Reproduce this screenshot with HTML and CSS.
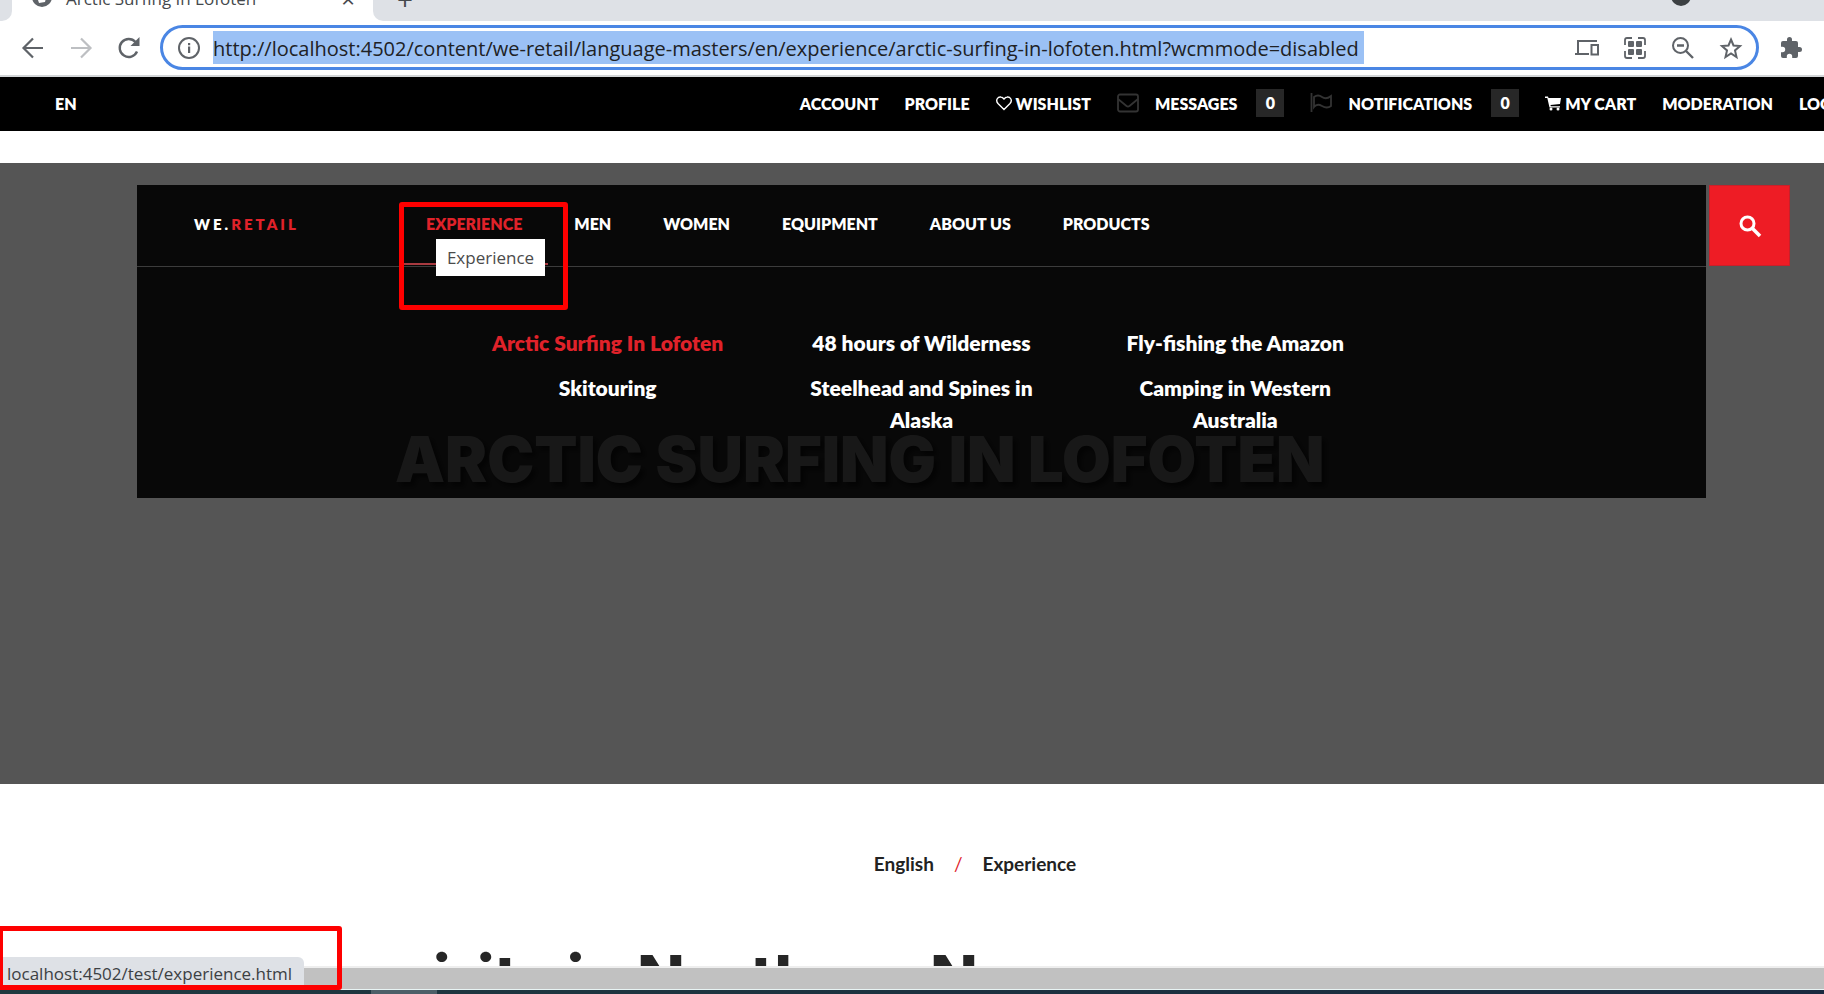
FILE: index.html
```html
<!DOCTYPE html>
<html lang="en">
<head>
    <meta charset="UTF-8">
    <meta name="viewport" content="width=device-width, initial-scale=1.0">
    <title>Arctic Surfing In Lofoten</title>
    <link rel="stylesheet" href="styles.css">
</head>
<body>

<div class="tab-strip">
    <div class="tab-edge"></div>
    <div class="tab">
        <svg class="tab-icon" viewBox="0 0 20 20"><circle cx="10" cy="10" r="10" fill="#5f6368"/><path d="M3 5l6 1 1 4 4 1-1 4-6 1-1-3-3-3z" fill="#fff"/></svg>
        <span class="tab-title">Arctic Surfing In Lofoten</span>
        <span class="tab-close">×</span>
    </div>
    <div class="tab-rest">
        <span class="new-tab">+</span>
        <span class="account-dot"></span>
    </div>
</div>

<div class="toolbar">
    <button class="tool" aria-label="Back"><svg viewBox="0 0 24 24"><path d="M22 12H3M12 2.500L2.500 12l9.500 9.500" fill="none" stroke="#5f6368" stroke-width="2.200"/></svg></button>
    <button class="tool" aria-label="Forward"><svg viewBox="0 0 24 24"><path d="M2 12h19M12 2.500l9.500 9.500-9.500 9.500" fill="none" stroke="#bdbfc2" stroke-width="2.200"/></svg></button>
    <button class="tool" aria-label="Reload"><svg viewBox="0 0 24 24"><path d="M20 15.500A9 9 0 1 1 18.500 6" fill="none" stroke="#5f6368" stroke-width="2.400"/><path d="M22.500 1v9h-9z" fill="#5f6368"/></svg></button>
    <div class="omnibox">
        <svg viewBox="0 0 24 24"><circle cx="12" cy="12" r="10" fill="none" stroke="#5f6368" stroke-width="2"/><path d="M11 10.500h2.200V17H11zM11 7h2.200v2.200H11z" fill="#5f6368"/></svg>
        <input type="text" class="url" aria-label="Address" value="http://localhost:4502/content/we-retail/language-masters/en/experience/arctic-surfing-in-lofoten.html?wcmmode=disabled">
        <div class="omnibox-icons">
            <svg viewBox="0 0 24 24"><path d="M3 18V5h19M0 18h14" fill="none" stroke="#5f6368" stroke-width="2"/><rect x="16.500" y="9" width="6.500" height="9.500" fill="none" stroke="#5f6368" stroke-width="2"/></svg>
            <svg viewBox="0 0 24 24"><path d="M2 9V4q0-2 2-2h5M15 2h5q2 0 2 2v5M22 15v5q0 2-2 2h-5M9 22H4q-2 0-2-2v-5" fill="none" stroke="#5f6368" stroke-width="1.800"/><g fill="#5f6368"><rect x="5" y="5" width="6" height="6" rx="1"/><rect x="13" y="5" width="6" height="6" rx="1"/><rect x="5" y="13" width="6" height="6" rx="1"/><rect x="13" y="13" width="6" height="6" rx="1"/></g></svg>
            <svg viewBox="0 0 24 24"><circle cx="9.500" cy="9.500" r="7.500" fill="none" stroke="#5f6368" stroke-width="2"/><path d="M6 9.500h7M15 15l7 7" fill="none" stroke="#5f6368" stroke-width="2.400"/></svg>
            <svg viewBox="0 0 24 24"><path d="M12 3.500l2.500 6 6.500.6-5 4.300 1.500 6.600L12 17.500 6.500 21l1.500-6.600-5-4.300 6.500-.6z" fill="none" stroke="#5f6368" stroke-width="2"/></svg>
        </div>
    </div>
    <button class="tool" aria-label="Extensions"><svg viewBox="0 0 24 24"><path d="M20.500 11H19V7a2 2 0 0 0-2-2h-4V3.500a2.500 2.500 0 0 0-5 0V5H4a2 2 0 0 0-2 2v3.800h1.500a2.700 2.700 0 0 1 0 5.400H2V20a2 2 0 0 0 2 2h3.800v-1.500a2.700 2.700 0 0 1 5.400 0V22H17a2 2 0 0 0 2-2v-4h1.500a2.500 2.500 0 0 0 0-5z" fill="#5f6368"/></svg></button>
</div>

<div class="top-bar">
    <a href="#">EN</a>
    <div class="top-links">
        <a href="#">ACCOUNT</a>
        <a href="#">PROFILE</a>
        <a href="#"><svg class="small-icon" viewBox="0 0 16 16"><path d="M8 14.500L2 8.500C-1 5 2 1.500 5 2c1.500.2 3 2 3 2s1.500-1.800 3-2c3-.5 6 3 3 6.500z" fill="none" stroke="#fff" stroke-width="1.400"/></svg>WISHLIST</a>
        <a href="#"><svg class="dim-icon" viewBox="0 0 22 22"><rect x="1" y="2.500" width="20" height="17" rx="2" fill="none" stroke="#333" stroke-width="1.800"/><path d="M1 7l8.500 7q1.500 1 3 0L21 7" fill="none" stroke="#333" stroke-width="1.800"/></svg>MESSAGES<span class="count">0</span></a>
        <a href="#"><svg class="dim-icon" viewBox="0 0 22 22"><path d="M1.500 1v19M4 5q4-3 8 0t9-1v10q-4 3-9 0t-8 1z" fill="none" stroke="#333" stroke-width="1.800"/></svg>NOTIFICATIONS<span class="count">0</span></a>
        <a href="#"><svg class="small-icon" viewBox="0 0 16 16"><path d="M0 1.500h3l.5 1.500H16l-1 6-9.500 1 .3 1.200H15v1.300H4.500L2.300 3H0z" fill="#fff"/><circle cx="6" cy="14" r="1.500" fill="#fff"/><circle cx="13" cy="14" r="1.500" fill="#fff"/></svg>MY CART</a>
        <a href="#">MODERATION</a>
        <a href="#">LOGIN</a>
    </div>
</div>

<div class="hero">
    <h1 class="hero-title">ARCTIC SURFING IN LOFOTEN</h1>
    <div class="menu-panel">
        <div class="menu-bar">
            <a href="#" class="logo">WE.<span>RETAIL</span></a>
            <nav class="main-nav">
                <a href="#" class="active">EXPERIENCE</a>
                <a href="#">MEN</a>
                <a href="#">WOMEN</a>
                <a href="#">EQUIPMENT</a>
                <a href="#">ABOUT US</a>
                <a href="#">PRODUCTS</a>
            </nav>
        </div>
        <div class="submenu">
            <a href="#" class="current">Arctic Surfing In Lofoten</a>
            <a href="#">48 hours of Wilderness</a>
            <a href="#">Fly-fishing the Amazon</a>
            <a href="#">Skitouring</a>
            <a href="#">Steelhead and Spines in Alaska</a>
            <a href="#">Camping in Western Australia</a>
        </div>
        <div class="tooltip">Experience</div>
        <div class="mark mark-menu"></div>
    </div>
    <button class="search" aria-label="Search"><svg viewBox="0 0 24 24"><circle cx="9.500" cy="9.500" r="6.500" fill="none" stroke="#fff" stroke-width="3"/><path d="M14 14l8 8" stroke="#fff" stroke-width="3.600"/></svg></button>
</div>

<div class="content">
    <div class="breadcrumb">
        <a href="#">English</a>
        <span>/</span>
        <a href="#">Experience</a>
    </div>
    <h2 class="headline">spirits in Northern Norway</h2>
</div>

<div class="scrollbar"></div>
<div class="taskbar"><span></span></div>

<div class="status">localhost:4502/test/experience.html</div>
<div class="mark mark-status"></div>

</body>
</html>
```

FILE: styles.css
```css
* {
    box-sizing: border-box;
}

body {
    display: flex;
    flex-direction: column;
    height: 100vh;
    margin: 0;
    overflow: hidden;
    font-family: Lato, sans-serif;
    font-weight: 800;
    background-color: #fff;
    color: #222;
}

a {
    color: inherit;
    text-decoration: none;
}

button {
    padding: 0;
    border: none;
    background: none;
}

svg {
    display: block;
}

/* browser chrome */
.tab-strip {
    display: flex;
    flex: none;
    height: 21px;
    font-family: "Open Sans", sans-serif;
    font-weight: 400;
    color: #45494d;
    background-color: #fff;
}

.tab-edge {
    width: 12px;
    background-color: #dee1e6;
    border-bottom-right-radius: 10px;
}

.tab {
    display: flex;
    align-items: flex-end;
    width: 361px;
    padding: 0 18px 0 20px;
    overflow: hidden;
}

.tab-icon {
    flex: none;
    width: 20px;
    height: 20px;
    margin-bottom: 14px;
}

.tab-title {
    flex: 1;
    margin: 0 0 12px 14px;
    font-size: 17px;
    line-height: 20px;
}

.tab-close {
    margin-bottom: 12px;
    font-size: 24px;
    line-height: 20px;
}

.tab-rest {
    display: flex;
    flex: 1;
    justify-content: space-between;
    align-items: flex-end;
    padding: 0 133px 0 24px;
    background-color: #dee1e6;
    border-bottom-left-radius: 10px;
}

.new-tab {
    margin-bottom: 12px;
    font-size: 28px;
    line-height: 20px;
}

.account-dot {
    width: 20px;
    height: 20px;
    margin-bottom: 15px;
    border-radius: 50%;
    background-color: #3c4043;
}

.toolbar {
    display: flex;
    flex: none;
    align-items: center;
    gap: 24px;
    height: 56px;
    padding: 0 21px 1px;
    border-bottom: 2px solid #d3d6d8;
}

.tool svg,
.omnibox svg {
    width: 24px;
    height: 24px;
}

.omnibox {
    display: flex;
    flex: 1;
    align-items: center;
    height: 45px;
    margin: 0 -4px 0 -5px;
    padding: 0 13px 0 14px;
    border: 3px solid #4a86e4;
    border-radius: 23px;
}

.url {
    width: 1151px;
    height: 33px;
    margin-left: 12px;
    padding: 1px 0 0;
    border: none;
    font-family: "Open Sans", sans-serif;
    font-size: 20px;
    color: #202124;
    background-color: #9bc1f5;
}

.omnibox-icons {
    display: flex;
    gap: 24px;
    margin-left: auto;
}

/* site header */
.top-bar {
    display: flex;
    flex: none;
    justify-content: space-between;
    align-items: center;
    height: 54px;
    padding: 0 0 2px 55px;
    font-size: 16px;
    color: #fff;
    background-color: #000;
}

.top-links {
    display: flex;
    gap: 26px;
    margin-right: -25px;
    white-space: nowrap;
}

.top-links a {
    display: flex;
    align-items: center;
}

.small-icon {
    width: 16px;
    height: 16px;
    margin-right: 4px;
}

.dim-icon {
    width: 22px;
    height: 22px;
    margin-right: 16px;
}

.count {
    width: 28px;
    margin-left: 19px;
    line-height: 28px;
    text-align: center;
    background-color: #272727;
}

.hero {
    position: relative;
    display: flex;
    flex: none;
    align-items: flex-start;
    gap: 3px;
    height: 621px;
    margin-top: 32px;
    padding: 22px 34px 0 137px;
    background-color: #555;
}

/* the open menu lies over the title and dims it */
.hero-title {
    position: absolute;
    top: 260px;
    left: 395px;
    margin: 0;
    font-family: Inter, sans-serif;
    font-size: 63px;
    font-weight: 900;
    line-height: 72px;
    white-space: nowrap;
    color: #fff;
    text-shadow: 4px 4px 4px rgba(0, 0, 0, 0.5);
}

.menu-panel {
    position: relative;
    flex: 1;
    height: 313px;
    color: #fff;
    background-color: rgba(0, 0, 0, 0.905);
}

.menu-bar {
    display: flex;
    height: 82px;
    padding-left: 57px;
    font-size: 16px;
    line-height: 78px;
    border-bottom: 1px solid #3c3c3c;
}

.logo {
    width: 206px;
    font-size: 15px;
    letter-spacing: 3px;
}

.logo span,
.main-nav .active,
.submenu .current {
    color: #e0222a;
}

.main-nav {
    display: flex;
}

.main-nav a {
    height: 80px;
    padding: 0 26px;
}

.main-nav .active {
    border-bottom: 2px solid #a83a40;
}

.submenu {
    display: grid;
    grid-template-columns: repeat(3, 1fr);
    row-gap: 13px;
    padding: 60px 20% 0;
    font-size: 21px;
    line-height: 32px;
    text-align: center;
}

.submenu a {
    padding: 0 32px;
}

.tooltip {
    position: absolute;
    top: 54px;
    left: 299px;
    width: 109px;
    font-family: "Open Sans", sans-serif;
    font-size: 17px;
    font-weight: 400;
    line-height: 37px;
    text-align: center;
    color: #4b4b4b;
    background-color: #fff;
}

.mark {
    position: absolute;
    border: 5px solid #fe0000;
    border-radius: 3px;
}

.mark-menu {
    top: 17px;
    left: 262px;
    width: 169px;
    height: 108px;
}

.search {
    display: flex;
    justify-content: center;
    align-items: center;
    width: 81px;
    height: 81px;
    background-color: #ee1c25;
    border: 1px solid #c8202a;
}

.search svg {
    width: 24px;
    height: 24px;
}

/* article */
.content {
    flex: 1;
    min-height: 0;
    overflow: hidden;
}

.breadcrumb {
    display: flex;
    justify-content: center;
    gap: 20px;
    padding: 67px 0 0 126px;
    font-size: 19px;
    font-weight: 700;
    line-height: 26px;
}

.breadcrumb span {
    font-weight: 400;
    color: #e0222a;
}

.headline {
    margin: 65px 0 0 358px;
    font-family: Inter, sans-serif;
    font-size: 62px;
    font-weight: 800;
    line-height: 72px;
    white-space: nowrap;
    color: #262626;
}

.scrollbar {
    flex: none;
    height: 24px;
    border-top: 2px solid #eee;
    border-bottom: 1px solid #e8f4f4;
    background-color: #c1c1c1;
}

.taskbar {
    flex: none;
    height: 4px;
    padding-left: 371px;
    background: linear-gradient(90deg, #203a40, #1a2a40);
}

.taskbar span {
    display: block;
    width: 66px;
    height: 4px;
    background-color: #4d5f68;
}

.status {
    position: absolute;
    bottom: 5px;
    left: 3px;
    padding: 2px 12px 0 4px;
    font-family: "Open Sans", sans-serif;
    font-size: 17px;
    font-weight: 400;
    line-height: 30px;
    color: #3c4043;
    background-color: #dee1e6;
    border-top-right-radius: 6px;
}

.mark-status {
    bottom: 4px;
    left: -2px;
    width: 344px;
    height: 64px;
}
```
